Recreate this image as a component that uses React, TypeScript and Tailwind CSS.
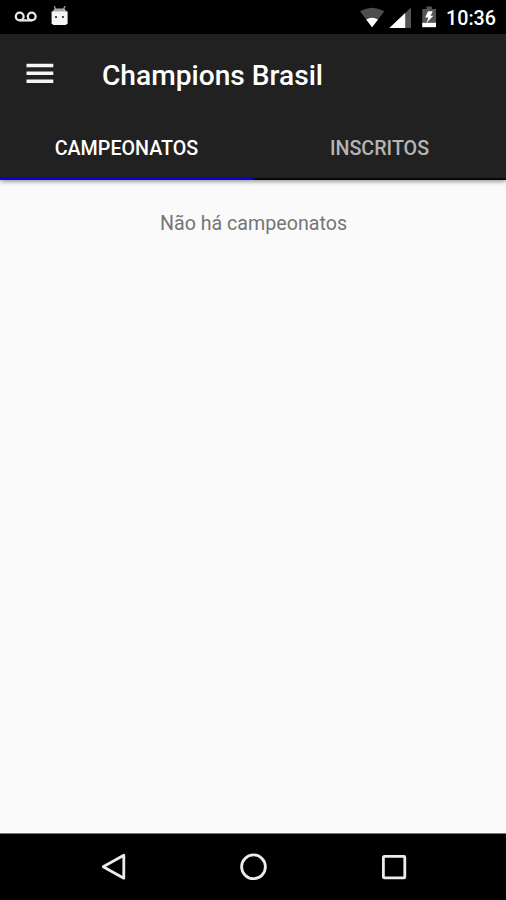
import { useState } from "react";

const tabs = [
  { id: "campeonatos", label: "CAMPEONATOS", empty: "Não há campeonatos" },
  { id: "inscritos", label: "INSCRITOS", empty: "Não há inscritos" },
];

function StatusBar() {
  return (
    <div className="flex h-[34px] shrink-0 items-start justify-between bg-black pt-1.5 pr-[10px] pl-[14px]">
      <div className="flex gap-3">
        {/* Voicemail */}
        <svg width="24" height="22" viewBox="0 0 24 22" fill="none" stroke="#e8e8e8" strokeWidth="2.3">
          <circle cx="5.7" cy="10.5" r="3.9" />
          <circle cx="17.7" cy="10.5" r="3.9" />
          <path d="M5.7 14.4h12" />
        </svg>
        {/* Android debug */}
        <svg width="20" height="22" viewBox="0 0 20 22" fill="none">
          <path d="M4.2 0l1.8 4M15 0l-1.8 4" stroke="#a0a0a0" strokeWidth="1.3" />
          <path d="M2.2 6L4.6 2.4h9.8L17 6z" fill="#a8a8a8" />
          <path d="M1.6 5.5h16V17.3l-1.7 1.7H3.3l-1.7-1.7z" fill="#f5f5f5" />
          <circle cx="6" cy="11" r="1.1" fill="#222" />
          <circle cx="13" cy="11" r="1.1" fill="#222" />
        </svg>
      </div>

      <div className="flex">
        {/* Wifi */}
        <svg width="25" height="22" viewBox="0 0 25 22">
          <path d="M0 5.3Q12 -2 24.4 5.3L12.1 21.3z" fill="#4d4d4d" />
          <path d="M6.2 13.6Q12 10 18 13.6L12.1 21.3z" fill="#fff" />
        </svg>
        {/* Mobile signal */}
        <svg className="ml-1" width="23" height="22" viewBox="0 0 23 22">
          <path d="M22 1.5V21.9H.4z" fill="#555" />
          <path d="M16.2 7V21.9H.4z" fill="#fff" />
        </svg>
        {/* Battery */}
        <svg className="ml-2.5" width="15" height="22" viewBox="0 0 15 22">
          <path d="M4.4 .6h5.4v2.4h4.2v18H.3V3h4.1z" fill="#555" />
          <path d="M.3 16.8h13.7V21.2H.3z" fill="#fff" />
          <path d="M6 5.2L3.2 11.4h3.2L4.4 17l7-7.2H8.6l2.2-4.6z" fill="#fff" />
        </svg>
        <span className="ml-[9px] w-[50px] text-[19.7px] leading-[25px] font-medium whitespace-nowrap text-white">
          10:36
        </span>
      </div>
    </div>
  );
}

function NavigationBar() {
  return (
    <nav className="flex h-[67px] shrink-0 items-center justify-center gap-[112px] border-t border-[#777] bg-black">
      <button aria-label="Voltar">
        <svg width="28" height="28" viewBox="0 0 28 28" fill="none" stroke="#ececec" strokeWidth="2.8">
          <path d="M24.8 2.3V25.2L4.2 13.8z" strokeLinejoin="round" />
        </svg>
      </button>
      <button aria-label="Início">
        <svg width="28" height="28" viewBox="0 0 28 28" fill="none" stroke="#ececec" strokeWidth="2.8">
          <circle cx="14.5" cy="13.8" r="11.9" />
        </svg>
      </button>
      <button aria-label="Recentes">
        <svg width="28" height="28" viewBox="0 0 28 28" fill="none" stroke="#ececec" strokeWidth="2.8">
          <rect x="4.4" y="3.4" width="21.4" height="21.4" rx=".8" />
        </svg>
      </button>
    </nav>
  );
}

export default function App() {
  const [active, setActive] = useState("campeonatos");
  const current = tabs.find((tab) => tab.id === active);

  return (
    <div className="flex h-screen w-full flex-col overflow-hidden bg-[#fafafa] font-['Roboto',sans-serif]">
      <StatusBar />

      {/* App bar */}
      <header className="flex h-[146px] shrink-0 flex-col bg-[#212121] shadow-[0_1px_5px_rgba(0,0,0,0.5)]">
        <div className="flex h-[79px] items-center pl-[26px]">
          <button aria-label="Menu">
            <svg width="28" height="22" viewBox="0 0 28 22" fill="#f5f5f5">
              <path d="M.5 .8h26.8v3.4H.5zM.5 8.6h26.8v3.4H.5zM.5 16.6h26.8v3.4H.5z" />
            </svg>
          </button>
          <h1 className="ml-12 pt-1 text-[28.15px] leading-8 font-medium whitespace-nowrap text-white">
            Champions Brasil
          </h1>
        </div>

        <div className="grid flex-1 grid-cols-2">
          {tabs.map((tab) => (
            <button
              key={tab.id}
              onClick={() => setActive(tab.id)}
              className={`text-[19.7px] font-medium ${
                tab.id === active
                  ? "border-b-3 border-[#0c00d8] pt-[7px] text-white"
                  : "border-b-2 border-[#080808] pt-1.5 text-[#b5b5b5]"
              }`}
            >
              {tab.label}
            </button>
          ))}
        </div>
      </header>

      <main className="flex-1 pt-8 pl-px text-center">
        <p className="text-[19.65px] leading-6 text-[#757575]">
          {current?.empty}
        </p>
      </main>

      <NavigationBar />
    </div>
  );
}
